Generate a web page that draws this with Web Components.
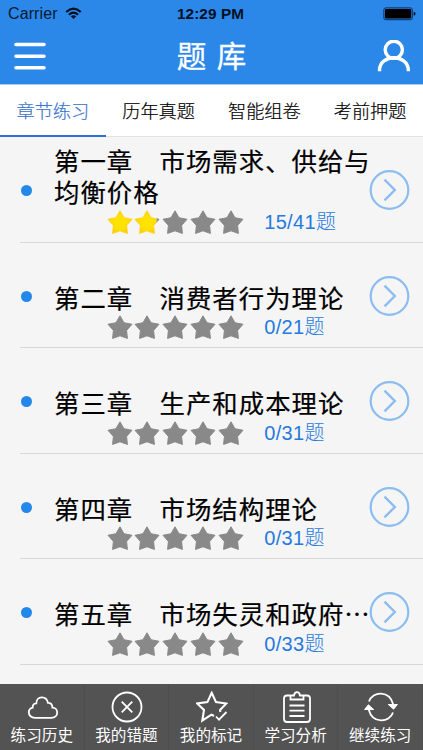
<!DOCTYPE html>
<html lang="zh-CN">
<head>
<meta charset="utf-8">
<title>题库</title>
<style>
html,body{margin:0;height:100%;overflow:hidden}
body{font-family:"Liberation Sans","Noto Sans CJK SC",sans-serif;background:#f5f5f5}
</style>
</head>
<body>
<quiz-app></quiz-app>
<script>
const define = (name, html) => customElements.define(name, class extends HTMLElement {
  connectedCallback() {
    if (this.shadowRoot) return;
    this.attachShadow({mode: 'open'}).innerHTML = typeof html === 'function' ? html(this) : html;
  }
});

define('status-bar', `
<style>
:host{display:grid;grid-template-columns:1fr auto 1fr;align-items:center;height:27px;padding:0 8px 0 8px;color:#071a33;box-sizing:border-box;font:16px/27px "Liberation Sans",sans-serif}
.l{display:flex;align-items:center;gap:7px}
.l span{letter-spacing:.1px}
b{font-size:15.3px;color:#03101f;letter-spacing:.1px;margin-left:-2px}
.r{justify-self:end;margin-right:-1px}
svg{display:block}
</style>
<div class="l"><span>Carrier</span>
<svg width="17" height="13" viewBox="0 0 18 14" fill="none" stroke="#03101f" stroke-width="2.3"><path d="M1.2 5.3Q9-1.9 16.8 5.3M4.1 8.4Q9 3.9 13.9 8.4"/><path d="M9 13L6 10Q9 7.6 12 10Z" fill="#03101f" stroke="none"/></svg></div>
<b>12:29 PM</b>
<svg class="r" width="33" height="14" viewBox="0 0 33 14"><rect x=".9" y=".9" width="28.4" height="11.8" rx="1.8" fill="none" stroke="#0b2d57" stroke-width="1"/><rect x="2" y="2" width="26.2" height="9.6" rx="1" fill="#000"/><path d="M30.7 4.8Q32.6 5.2 32.6 6.8T30.7 8.8Z" fill="#03101f"/></svg>`);

define('nav-bar', `
<style>
:host{display:flex;justify-content:space-between;align-items:center;height:57px;padding:0 12.5px 0 13.5px;color:#fff;box-sizing:border-box}
h1{margin:0 0 2px 0;font:400 29.5px/55px "Noto Sans CJK SC",sans-serif;word-spacing:4px;white-space:pre;-webkit-text-stroke:.3px #fff}
svg{display:block}
</style>
<svg width="32" height="28" viewBox="0 0 32 28" stroke="#fff" stroke-width="3.6" stroke-linecap="round"><path d="M2 2.5H30M2 14.2H30M2 25.8H30"/></svg>
<h1>题 库</h1>
<svg width="33" height="32" viewBox="0 0 33 32" fill="none" stroke="#fff" stroke-width="3.4"><circle cx="16.8" cy="9.8" r="8.6"/><path d="M2.5 31.2V30C2.8 13.6 30.9 13.6 31.3 30V31.2"/></svg>`);

define('tab-item', `
<style>
:host{display:block;flex:1;box-sizing:border-box;height:52px;text-align:center;font:300 18.2px/51px "Noto Sans CJK SC",sans-serif;color:#000;border-bottom:1px solid #e2e2e2;white-space:nowrap;-webkit-text-stroke:.2px}
:host([active]){color:#3c74cf;border-bottom:2.5px solid #2f6fd0}
</style><slot></slot>`);

define('tab-bar', `<style>:host{display:flex;background:#fff;border-top:1px solid #a9cdf8}</style><slot></slot>`);

const STAR = 'M13 .8L17 7.7 25 9.3 19.6 15.4 20.4 23.4 13 20.8 5.6 23.4 6.4 15.4 1 9.3 9 7.7Z';
define('star-rating', el => {
  const v = +el.getAttribute('value');
  let s = '';
  for (let i = 0; i < 5; i++) {
    const w = Math.max(0, Math.min(1, v - i)) * 27;
    s += `<svg width="27.8" height="25" viewBox="0 0 27.8 25" stroke-linejoin="round"><defs><radialGradient id="y"><stop offset="0" stop-color="#ffe500"/><stop offset=".65" stop-color="#ffe000"/><stop offset="1" stop-color="#ffca12"/></radialGradient><clipPath id="c${i}"><rect width="${w}" height="25"/></clipPath><clipPath id="g${i}"><rect x="${w}" width="${27.8 - w}" height="25"/></clipPath></defs><path d="${STAR}" fill="#898989" stroke="#898989" clip-path="url(#g${i})"/><path d="${STAR}" fill="url(#y)" stroke="#ffd414" clip-path="url(#c${i})"/></svg>`;
  }
  return `<style>:host{display:flex}svg{display:block;flex:none}</style>${s}`;
});

define('chapter-row', el => `
<style>
:host{display:grid;grid-template-columns:34px 318px 1fr;height:105.6px;margin-left:20px;border-bottom:1.3px solid #d8d8d8;box-sizing:border-box}
.dot{width:11px;height:11px;border-radius:50%;background:#2488eb;margin:48px 0 0 1px}
.main{display:flex;flex-direction:column;min-width:0}
h2{margin:0;height:70px;display:flex;align-items:flex-end;font:400 25.4px/31px "Noto Sans CJK SC",sans-serif;letter-spacing:1px;color:#000;-webkit-text-stroke:.2px #000}
.meta{display:flex;align-items:center;height:28px;padding:1px 0 0 52.7px;font:300 20px/26px "Liberation Sans","Noto Sans CJK SC",sans-serif;letter-spacing:.35px;color:#2679df}
.meta span{margin:-1px 0 0 18.5px;white-space:nowrap}
.go{display:block;margin:33px 0 0 -3px}
</style>
<div class="dot"></div>
<div class="main"><h2><span>${el.getAttribute('heading')}</span></h2>
<div class="meta"><star-rating value="${el.getAttribute('rating') || 0}"></star-rating><span>${el.getAttribute('count')}</span></div></div>
<svg class="go" width="41" height="41" viewBox="0 0 41 41" fill="none" stroke="#8cbdf0" stroke-width="2.2"><circle cx="20.5" cy="20" r="18.8"/><path d="M15.5 9.7L25.8 20 15.5 30.3" stroke-width="2.4"/></svg>`);

define('tool-item', `
<style>
:host{display:flex;flex:1;flex-direction:column;align-items:center;height:66px;color:#fff;border-right:1px solid #4e4e4e;box-sizing:border-box;font:400 15.6px/20px "Noto Sans CJK SC",sans-serif;white-space:nowrap}
.i{height:32px;margin:7px 0 0 2px;display:flex;align-items:center}
.t{margin-top:1px}
</style><div class="i"><slot name="icon"></slot></div><div class="t"><slot></slot></div>`);

define('tool-bar', `<style>:host{display:flex;background:#535353;height:66px}</style><slot></slot>`);

define('quiz-app', `
<style>
:host{display:flex;flex-direction:column;height:750px;width:423px;overflow:hidden;background:#f5f5f5}
header{background:#2b88e9;height:84px;flex:none}
main{flex:1;min-height:0;overflow:hidden}
tab-bar,tool-bar{flex:none}
svg{display:block;fill:none;stroke:#fff;stroke-width:1.8}
</style>
<header><status-bar></status-bar><nav-bar></nav-bar></header>
<tab-bar><tab-item active>章节练习</tab-item><tab-item>历年真题</tab-item><tab-item>智能组卷</tab-item><tab-item>考前押题</tab-item></tab-bar>
<main>
<chapter-row heading="第一章　市场需求、供给与均衡价格" rating="1.83" count="15/41题"></chapter-row>
<chapter-row heading="第二章　消费者行为理论" count="0/21题"></chapter-row>
<chapter-row heading="第三章　生产和成本理论" count="0/31题"></chapter-row>
<chapter-row heading="第四章　市场结构理论" count="0/31题"></chapter-row>
<chapter-row heading="第五章　市场失灵和政府⋯" count="0/33题"></chapter-row>
</main>
<tool-bar>
<tool-item><svg slot="icon" width="32" height="32" viewBox="0 0 32 32"><path d="M8 26.8H24.5C28.2 26.8 30.2 24.3 30.2 21.6 30.2 18.4 27.9 16.6 25.4 16.6 25.4 12.9 23.2 11.6 20.9 11.8 19.4 4.3 9.4 4.8 9.3 12.3 6.4 12.2 5.5 14.5 5.7 16.7 3.4 17.2 1.8 19.2 1.8 21.6 1.8 24.3 4.2 26.8 8 26.8Z"/></svg>练习历史</tool-item>
<tool-item><svg slot="icon" width="32" height="32" viewBox="0 0 32 32"><circle cx="16" cy="16" r="14.5"/><path d="M10.7 10.7L21.3 21.3M21.3 10.7L10.7 21.3"/></svg>我的错题</tool-item>
<tool-item><svg slot="icon" width="32" height="32" viewBox="0 0 32 32"><path d="M18 25L15.5 23.6 6.3 29.5 8 19 1.2 12.5 11.4 11.1 15.7 1.8 20 11.1 30.3 12.5 24 19 24.4 21" stroke-width="2.1"/><path d="M20 25.5L23 28.7 30.5 21"/></svg>我的标记</tool-item>
<tool-item><svg slot="icon" width="32" height="32" viewBox="0 0 32 32"><path d="M9 4.5H6Q3 4.5 3 7.5V28Q3 31 6 31H26Q29 31 29 28V7.5Q29 4.5 26 4.5H23M9.5 8.5V4.5H13Q13.5 1.2 16 1.2T19 4.5H22.5V8.5ZM8.5 14.5H23.5M8.5 19.7H23.5M8.5 25H23.5"/></svg>学习分析</tool-item>
<tool-item><svg slot="icon" width="34" height="32" viewBox="0 0 34 32"><path d="M5 10.5C8.5 0 25.5-1.2 29.3 13.5M29 21.5C25.5 32 8.5 33.2 4.7 18.5"/><path d="M24.3 13.5H33.4L29.6 18.2ZM.6 18.5H9.7L4.4 13.8Z" fill="#fff" stroke-width="1"/></svg>继续练习</tool-item>
</tool-bar>`);
</script>
</body>
</html>
